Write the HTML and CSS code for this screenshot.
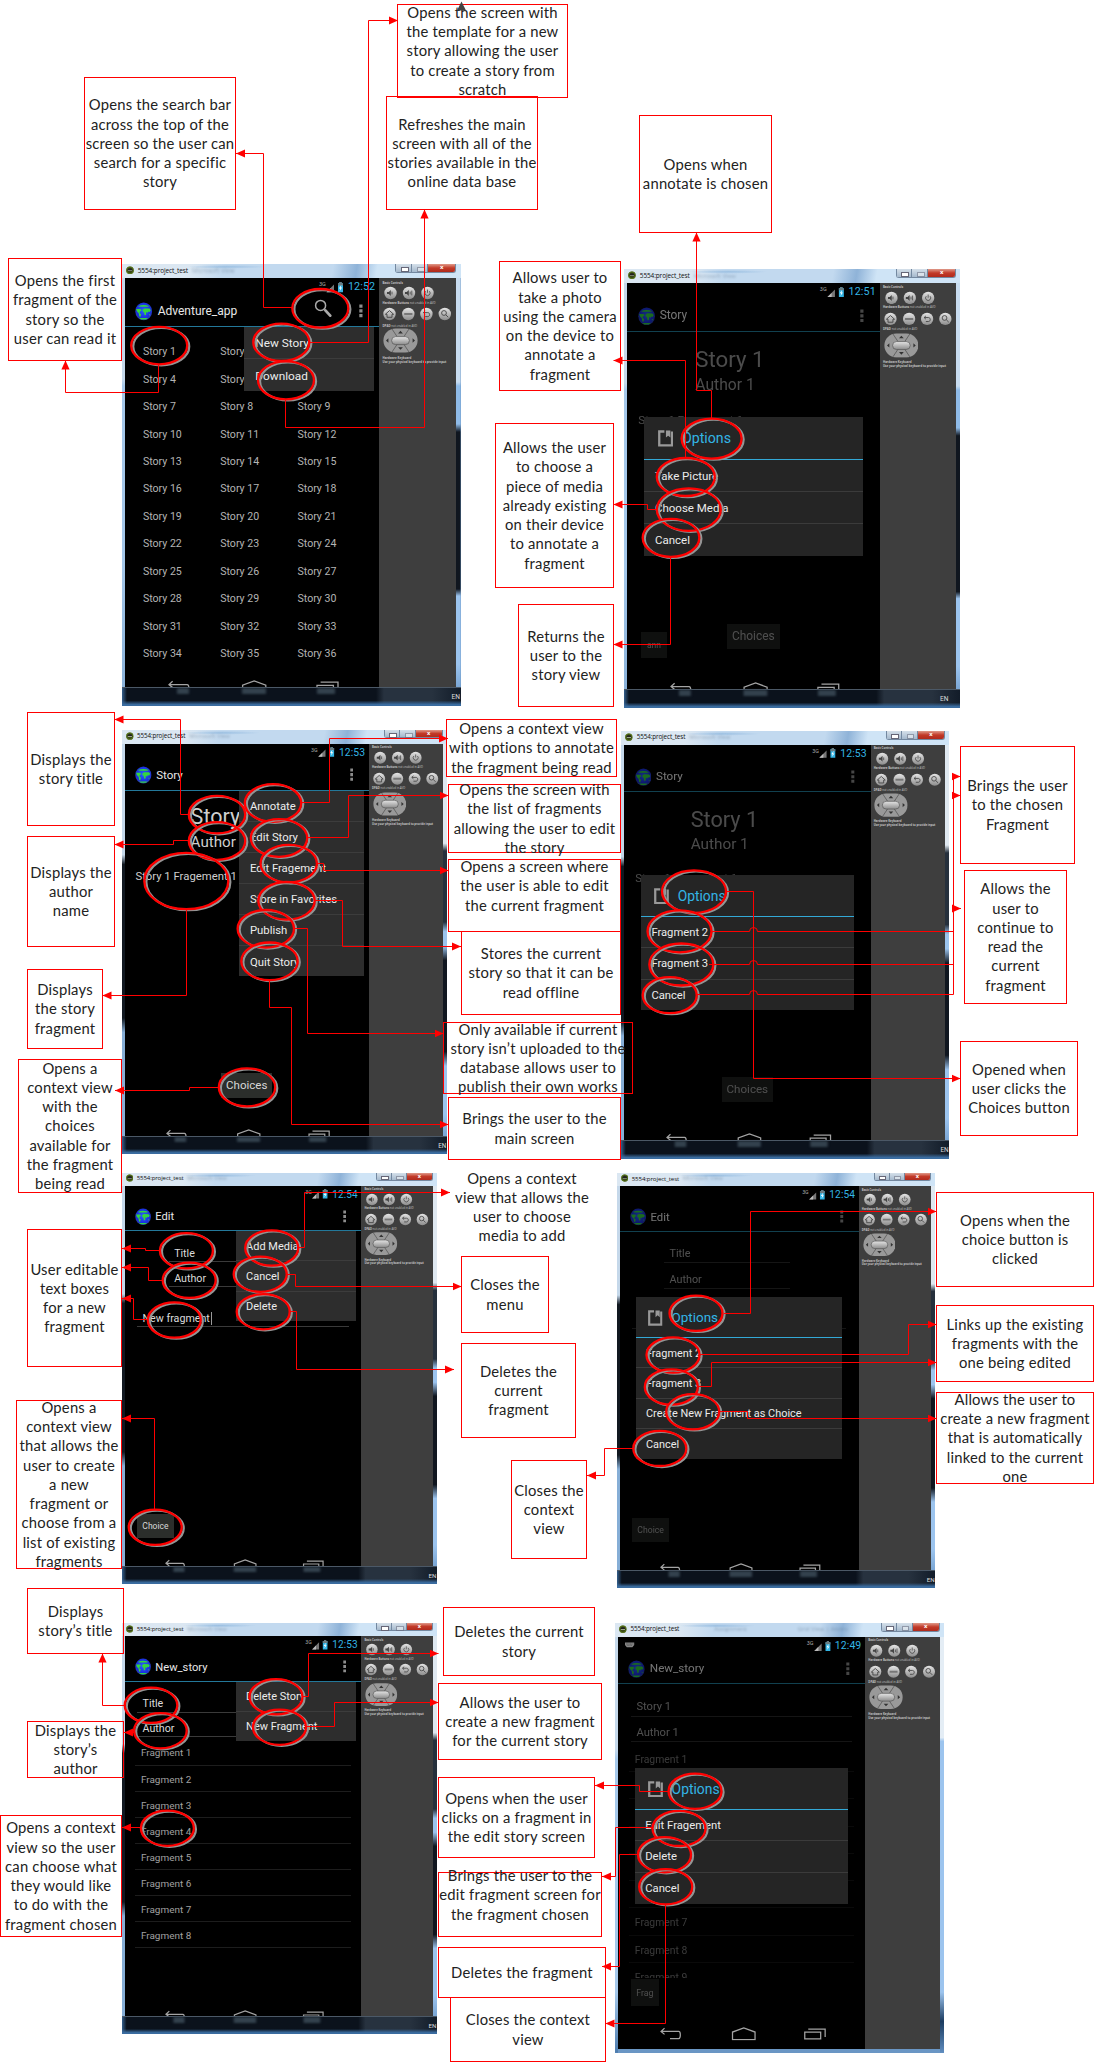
FILE: index.html
```html
<!DOCTYPE html>
<html lang="en">
<head>
<meta charset="utf-8">
<title>Adventure app storyboard</title>
<link rel="stylesheet" href="styles.css">
</head>
<body>
<svg class="defs" width="0" height="0" aria-hidden="true">
  <defs>
    <radialGradient id="sea" cx=".5" cy=".45" r=".55"><stop offset="0" stop-color="#2a62ff"/><stop offset=".75" stop-color="#1a30e0"/><stop offset="1" stop-color="#2b3fa8"/></radialGradient>
    <linearGradient id="metal" x1="0" y1="0" x2="0" y2="1"><stop offset="0" stop-color="#e4e4e4"/><stop offset="1" stop-color="#8c8c8c"/></linearGradient>
    <marker id="arrow" viewBox="0 0 9 9" refX="9" refY="4.5" markerWidth="9" markerHeight="9" markerUnits="userSpaceOnUse" orient="auto"><path d="M0 .4L9 4.5L0 8.6z" fill="#f00"/></marker>
  </defs>
  <symbol id="globe" viewBox="0 0 18 19"><ellipse cx="9" cy="9.5" rx="8.7" ry="9.2" fill="url(#sea)"/><path d="M3 4.2Q9 1.6 15 4.2L13 4.8H5zM1.2 7h4.6l1 1.6-1.6 1-.4 1.6 1.6 1.2-.8 3-1.2-.8-.4-3L2 9.4zM8 7.6l2-1.2 5 .2 1.4 1.6-1.2 2-1.4-.6-.6 1.4-1.6-.8-.2 3-1.4.4-.6-3L8 9.4zM14.4 12.4l1.4.2-.8 1.4zM4.4 16.4h9l-2 1.5H6.6z" fill="#35d63f"/></symbol>
  <symbol id="droid" viewBox="0 0 9 9"><circle cx="4.5" cy="4.5" r="4.3" fill="#3a4a18"/><circle cx="4.5" cy="4.5" r="3.9" fill="none" stroke="#6b8f1c" stroke-width=".8"/><path d="M1.7 5.4V4.5a2.8 2.3 0 0 1 5.6 0v.9z" fill="#222"/><path d="M2 4.4h5v.7H2z" fill="#c9d6b4"/></symbol>
  <symbol id="signals" viewBox="0 0 24 12"><path d="M5.5 11.2L13 3.6v7.6z" fill="#777"/><path d="M9.7 7v4.2H5.5z" fill="#bbb"/><path d="M17 2.2h1.4V1h2.2v1.2H22v9h-5z" fill="#33b5e5"/><path d="M17 2.2h1.4V1h2.2v1.2H22v2.2h-5z" fill="#6b7b80"/><path d="M20.3 4l-2.4 3.4h1.4l-.6 2.6 2.4-3.4h-1.4z" fill="#fff"/></symbol>
  <symbol id="dots" viewBox="0 0 4 14"><path d="M.3.5h3.2v3.2H.3zM.3 5.3h3.2v3.2H.3zM.3 10.1h3.2v3.2H.3z" fill="#8c8c8c"/></symbol>
  <symbol id="lens" viewBox="0 0 18 18"><circle cx="6.6" cy="6.4" r="5" fill="none" stroke="#aaa" stroke-width="1.5"/><path d="M10.2 10.4l1.6 1.6" stroke="#aaa" stroke-width="1.4"/><path d="M11.6 11.6l4.6 5" stroke="#aaa" stroke-width="2.8" stroke-linecap="round"/></symbol>
  <symbol id="note" viewBox="0 0 16 17"><path d="M6.6 1.3H1.3v14.4h13.2V1.3" fill="none" stroke="#999" stroke-width="2.4"/><path d="M8.2.2h4.6v7.4l-2.3-2-2.3 2z" fill="#999"/></symbol>
  <symbol id="nav" viewBox="0 0 172 14"><g fill="none" stroke="#a4a4a4" stroke-width="1.3"><path d="M4.6 1.2L1 4.6l3.6 3M1.4 4.6h17.8c2.2 0 2.2 7.4 0 7.4h-9"/><path d="M74.6 13.1V5.2L86.2 1l11.6 4.2v7.9z"/><path d="M149 5.4h16.4v6.8H149zM152.6 2.2H170v8"/></g></symbol>
  <symbol id="row1" viewBox="0 0 68 14"><g fill="url(#metal)"><circle cx="8.5" cy="7" r="6.2"/><circle cx="27" cy="7" r="6.2"/><circle cx="45.5" cy="7" r="6.2"/></g><path d="M5 6h1.8l2-2v6l-2-2H5zM23 6h1.8l2-2v6l-2-2H23z" fill="#444"/><path d="M10 5.6v2.8M28.2 5.6v2.8M29.8 4.6v4.8M45.5 3.6v3.2M43.6 5.2a2.6 2.6 0 1 0 3.8 0" fill="none" stroke="#444" stroke-width=".8"/></symbol>
  <symbol id="row2" viewBox="0 0 72 14"><g fill="url(#metal)"><circle cx="7.5" cy="7" r="6.2"/><circle cx="26.3" cy="7" r="6.2"/><circle cx="44.4" cy="7" r="6.2"/><circle cx="62.8" cy="7" r="6.2"/></g><g fill="none" stroke="#444" stroke-width=".9"><path d="M3.4 7.3L7.5 3.6l4.1 3.7H10v3H5v-3z"/><path d="M43.2 4l-1.8 1.6 1.8 1.6M41.6 5.6h4.2c2.4 0 2.4 4 0 4h-2.6"/><circle cx="62" cy="6" r="2.4"/><path d="M63.8 7.8l2.4 2.4"/></g><path d="M22.2 6h8.2v2h-8.2z" fill="#777"/></symbol>
  <symbol id="dpad" viewBox="0 0 35 25"><rect x=".4" y=".4" width="34.2" height="24.2" rx="12" fill="#999"/><path d="M9 1l5 7.5M26 1l-5 7.5M9 24l5-7.5M26 24l-5-7.5" stroke="#555" stroke-width=".8"/><rect x="8.6" y="8.6" width="17.8" height="8" rx="4" fill="url(#metal)" stroke="#555" stroke-width=".7"/><path d="M17.5 2.8l2.4 2.6h-4.8zM17.5 21.8l2.4-2.6h-4.8zM3 12.5l2.4-2.2v4.4zM32 12.5l-2.4-2.2v4.4z" fill="#333"/></symbol>
</svg>

<main class="board">

<section class="device d1"><div class="phone">
  <header class="frame-bar"><svg class="droid"><use href="#droid"/></svg><b>5554:project_test</b><i>Microsoft View</i><span class="win"><u></u><u></u><em>x</em></span></header>
  <div class="inner">
    <div class="screen">
      <div class="status"><small>3G</small><svg class="signals"><use href="#signals"/></svg><span>12:52</span></div>
      <div class="appbar"><svg class="globe"><use href="#globe"/></svg><h2>Adventure_app</h2><svg class="lens"><use href="#lens"/></svg><svg class="dots"><use href="#dots"/></svg></div>
      <div class="stories"><span>Story 1</span><span>Story 2</span><span>Story 3</span><span>Story 4</span><span>Story 5</span><span>Story 6</span><span>Story 7</span><span>Story 8</span><span>Story 9</span><span>Story 10</span><span>Story 11</span><span>Story 12</span><span>Story 13</span><span>Story 14</span><span>Story 15</span><span>Story 16</span><span>Story 17</span><span>Story 18</span><span>Story 19</span><span>Story 20</span><span>Story 21</span><span>Story 22</span><span>Story 23</span><span>Story 24</span><span>Story 25</span><span>Story 26</span><span>Story 27</span><span>Story 28</span><span>Story 29</span><span>Story 30</span><span>Story 31</span><span>Story 32</span><span>Story 33</span><span>Story 34</span><span>Story 35</span><span>Story 36</span></div>
      <ul class="menu"><li>New Story</li><li>Download</li></ul>
      <svg class="nav"><use href="#nav"/></svg>
    </div>
    <aside class="controls"><p><b>Basic Controls</b></p><svg class="row1"><use href="#row1"/></svg><p><b>Hardware Buttons</b> not enabled in AVD</p><svg class="row2"><use href="#row2"/></svg><p><b>DPAD</b> not enabled in AVD</p><svg class="dpad"><use href="#dpad"/></svg><p><b>Hardware Keyboard<br>Use your physical keyboard to provide input</b></p></aside>
  </div>
  <footer class="taskbar"><span>EN</span></footer>
</div></section>

<section class="device d2"><div class="phone">
  <header class="frame-bar"><svg class="droid"><use href="#droid"/></svg><b>5554:project_test</b><i>Microsoft View</i><span class="win"><u></u><u></u><em>x</em></span></header>
  <div class="inner">
    <div class="screen dim">
      <div class="status"><small>3G</small><svg class="signals"><use href="#signals"/></svg><span>12:51</span></div>
      <div class="appbar"><svg class="globe"><use href="#globe"/></svg><h2>Story</h2><svg class="dots"><use href="#dots"/></svg></div>
      <div class="reader"><h3>Story 1</h3><h4>Author 1</h4><p>Story 1 Fragement 1</p><div class="keys two"><span class="key low">ann</span><span class="key">Choices</span></div></div>
      <div class="dialog"><h5><svg class="note-icon"><use href="#note"/></svg>Options</h5><ul><li>Take Picture</li><li>Choose Media</li><li>Cancel</li></ul></div>
      <svg class="nav"><use href="#nav"/></svg>
    </div>
    <aside class="controls"><p><b>Basic Controls</b></p><svg class="row1"><use href="#row1"/></svg><p><b>Hardware Buttons</b> not enabled in AVD</p><svg class="row2"><use href="#row2"/></svg><p><b>DPAD</b> not enabled in AVD</p><svg class="dpad"><use href="#dpad"/></svg><p><b>Hardware Keyboard<br>Use your physical keyboard to provide input</b></p></aside>
  </div>
  <footer class="taskbar"><span class="inset">EN</span></footer>
</div></section>

<section class="device d3"><div class="phone">
  <header class="frame-bar"><svg class="droid"><use href="#droid"/></svg><b>5554:project_test</b><i>Microsoft View</i><span class="win"><u></u><u></u><em>x</em></span></header>
  <div class="inner">
    <div class="screen">
      <div class="status"><small>3G</small><svg class="signals"><use href="#signals"/></svg><span>12:53</span></div>
      <div class="appbar"><svg class="globe"><use href="#globe"/></svg><h2>Story</h2><svg class="dots"><use href="#dots"/></svg></div>
      <div class="reader"><h3>Story 1</h3><h4>Author 1</h4><p>Story 1 Fragement 1</p><div class="keys"><span class="key">Choices</span></div></div>
      <ul class="menu"><li>Annotate</li><li>Edit Story</li><li>Edit Fragement</li><li>Store in Favorites</li><li>Publish</li><li>Quit Story</li></ul>
      <svg class="nav"><use href="#nav"/></svg>
    </div>
    <aside class="controls"><p><b>Basic Controls</b></p><svg class="row1"><use href="#row1"/></svg><p><b>Hardware Buttons</b> not enabled in AVD</p><svg class="row2"><use href="#row2"/></svg><p><b>DPAD</b> not enabled in AVD</p><svg class="dpad"><use href="#dpad"/></svg><p><b>Hardware Keyboard<br>Use your physical keyboard to provide input</b></p></aside>
  </div>
  <footer class="taskbar"><span>EN</span></footer>
</div></section>

<section class="device d4"><div class="phone">
  <header class="frame-bar"><svg class="droid"><use href="#droid"/></svg><b>5554:project_test</b><i>Microsoft View</i><span class="win"><u></u><u></u><em>x</em></span></header>
  <div class="inner">
    <div class="screen dim">
      <div class="status"><small>3G</small><svg class="signals"><use href="#signals"/></svg><span>12:53</span></div>
      <div class="appbar"><svg class="globe"><use href="#globe"/></svg><h2>Story</h2><svg class="dots"><use href="#dots"/></svg></div>
      <div class="reader"><h3>Story 1</h3><h4>Author 1</h4><p>Story 1 Fragement 1</p><div class="keys"><span class="key">Choices</span></div></div>
      <div class="dialog"><h5><svg class="note-icon"><use href="#note"/></svg>Options</h5><ul><li>Fragment 2</li><li>Fragment 3</li><li>Cancel</li></ul></div>
      <svg class="nav"><use href="#nav"/></svg>
    </div>
    <aside class="controls"><p><b>Basic Controls</b></p><svg class="row1"><use href="#row1"/></svg><p><b>Hardware Buttons</b> not enabled in AVD</p><svg class="row2"><use href="#row2"/></svg><p><b>DPAD</b> not enabled in AVD</p><svg class="dpad"><use href="#dpad"/></svg><p><b>Hardware Keyboard<br>Use your physical keyboard to provide input</b></p></aside>
  </div>
  <footer class="taskbar"><span>EN</span></footer>
</div></section>

<section class="device d5"><div class="phone">
  <header class="frame-bar"><svg class="droid"><use href="#droid"/></svg><b>5554:project_test</b><i>Microsoft View</i><span class="win"><u></u><u></u><em>x</em></span></header>
  <div class="inner">
    <div class="screen">
      <div class="status"><small>3G</small><svg class="signals"><use href="#signals"/></svg><span>12:54</span></div>
      <div class="appbar"><svg class="globe"><use href="#globe"/></svg><h2>Edit</h2><svg class="dots"><use href="#dots"/></svg></div>
      <div class="editor"><p class="field">Title</p><p class="field">Author</p><p class="field wide"><span class="caret">New fragment</span></p><span class="key">Choice</span></div>
      <ul class="menu"><li>Add Media</li><li>Cancel</li><li>Delete</li></ul>
      <svg class="nav"><use href="#nav"/></svg>
    </div>
    <aside class="controls"><p><b>Basic Controls</b></p><svg class="row1"><use href="#row1"/></svg><p><b>Hardware Buttons</b> not enabled in AVD</p><svg class="row2"><use href="#row2"/></svg><p><b>DPAD</b> not enabled in AVD</p><svg class="dpad"><use href="#dpad"/></svg><p><b>Hardware Keyboard<br>Use your physical keyboard to provide input</b></p></aside>
  </div>
  <footer class="taskbar"><span>EN</span></footer>
</div></section>

<section class="device d6"><div class="phone">
  <header class="frame-bar"><svg class="droid"><use href="#droid"/></svg><b>5554:project_test</b><i>Microsoft View</i><span class="win"><u></u><u></u><em>x</em></span></header>
  <div class="inner">
    <div class="screen dim">
      <div class="status"><small>3G</small><svg class="signals"><use href="#signals"/></svg><span>12:54</span></div>
      <div class="appbar"><svg class="globe"><use href="#globe"/></svg><h2>Edit</h2><svg class="dots"><use href="#dots"/></svg></div>
      <div class="editor"><p class="field">Title</p><p class="field">Author</p><p class="field wide"></p><span class="key">Choice</span></div>
      <div class="dialog high"><h5><svg class="note-icon"><use href="#note"/></svg>Options</h5><ul><li>Fragment 2</li><li>Fragment 3</li><li>Create New Fragment as Choice</li><li>Cancel</li></ul></div>
      <svg class="nav"><use href="#nav"/></svg>
    </div>
    <aside class="controls"><p><b>Basic Controls</b></p><svg class="row1"><use href="#row1"/></svg><p><b>Hardware Buttons</b> not enabled in AVD</p><svg class="row2"><use href="#row2"/></svg><p><b>DPAD</b> not enabled in AVD</p><svg class="dpad"><use href="#dpad"/></svg><p><b>Hardware Keyboard<br>Use your physical keyboard to provide input</b></p></aside>
  </div>
  <footer class="taskbar"><span>EN</span></footer>
</div></section>

<section class="device d7"><div class="phone">
  <header class="frame-bar"><svg class="droid"><use href="#droid"/></svg><b>5554:project_test</b><i>Microsoft View</i><span class="win"><u></u><u></u><em>x</em></span></header>
  <div class="inner">
    <div class="screen">
      <div class="status"><small>3G</small><svg class="signals"><use href="#signals"/></svg><span>12:53</span></div>
      <div class="appbar"><svg class="globe"><use href="#globe"/></svg><h2>New_story</h2><svg class="dots"><use href="#dots"/></svg></div>
      <div class="editor"><p class="field full">Title</p><p class="field full">Author</p></div>
      <ol class="fragments"><li>Fragment 1</li><li>Fragment 2</li><li>Fragment 3</li><li>Fragment 4</li><li>Fragment 5</li><li>Fragment 6</li><li>Fragment 7</li><li>Fragment 8</li></ol>
      <ul class="menu"><li>Delete Story</li><li>New Fragment</li></ul>
      <svg class="nav"><use href="#nav"/></svg>
    </div>
    <aside class="controls"><p><b>Basic Controls</b></p><svg class="row1"><use href="#row1"/></svg><p><b>Hardware Buttons</b> not enabled in AVD</p><svg class="row2"><use href="#row2"/></svg><p><b>DPAD</b> not enabled in AVD</p><svg class="dpad"><use href="#dpad"/></svg><p><b>Hardware Keyboard<br>Use your physical keyboard to provide input</b></p></aside>
  </div>
  <footer class="taskbar"><span>EN</span></footer>
</div></section>

<section class="device d8"><div class="phone">
  <header class="frame-bar"><svg class="droid"><use href="#droid"/></svg><b>5554:project_test</b><i class="tabs"><span>Assignment</span><span>Grid View | Andro</span></i><span class="win"><u></u><u></u><em>x</em></span></header>
  <div class="inner">
    <div class="screen dim">
      <div class="status"><svg class="keyboard" viewBox="0 0 10 6"><path d="M0 .5h10v2.6L8 5.4H2L0 3.1z" fill="#888"/><path d="M1 2h8M2 3.4h6" stroke="#222" stroke-width=".5" stroke-dasharray="1 .5"/></svg><small>3G</small><svg class="signals"><use href="#signals"/></svg><span>12:49</span></div>
      <div class="appbar"><svg class="globe"><use href="#globe"/></svg><h2>New_story</h2><svg class="dots"><use href="#dots"/></svg></div>
      <div class="editor"><p class="field full">Story 1</p><p class="field full">Author 1</p></div>
      <ol class="fragments cut"><li>Fragment 1</li><li>Fragment 2</li><li>Fragment 3</li><li>Fragment 4</li><li>Fragment 5</li><li>Fragment 6</li><li>Fragment 7</li><li>Fragment 8</li><li>Fragment 9</li></ol>
      <span class="key frag">Frag</span>
      <div class="dialog"><h5><svg class="note-icon"><use href="#note"/></svg>Options</h5><ul><li>Edit Fragement</li><li>Delete</li><li>Cancel</li></ul></div>
      <svg class="nav"><use href="#nav"/></svg>
    </div>
    <aside class="controls"><p><b>Basic Controls</b></p><svg class="row1"><use href="#row1"/></svg><p><b>Hardware Buttons</b> not enabled in AVD</p><svg class="row2"><use href="#row2"/></svg><p><b>DPAD</b> not enabled in AVD</p><svg class="dpad"><use href="#dpad"/></svg><p><b>Hardware Keyboard<br>Use your physical keyboard to provide input</b></p></aside>
  </div>
</div></section>

<p class="callout c-template">Opens the screen with<br>the template for a new<br>story allowing the user<br>to create a story from<br>scratch</p>
<p class="callout c-search">Opens the search bar<br>across the top of the<br>screen so the user can<br>search for a specific<br>story</p>
<p class="callout c-refresh">Refreshes the main<br>screen with all of the<br>stories available in the<br>online data base</p>
<p class="callout c-first">Opens the first<br>fragment of the<br>story so the<br>user can read it</p>
<p class="callout c-annotate">Opens when<br>annotate is chosen</p>
<p class="callout c-photo">Allows user to<br>take a photo<br>using the camera<br>on the device to<br>annotate a<br>fragment</p>
<p class="callout c-media">Allows the user<br>to choose a<br>piece of media<br>already existing<br>on their device<br>to annotate a<br>fragment</p>
<p class="callout c-return">Returns the<br>user to the<br>story view</p>
<p class="callout c-title">Displays the<br>story title</p>
<p class="callout c-author">Displays the<br>author<br>name</p>
<p class="callout c-fragment">Displays<br>the story<br>fragment</p>
<p class="callout c-choices">Opens a<br>context view<br>with the<br>choices<br>available for<br>the fragment<br>being read</p>
<p class="callout c-options">Opens a context view<br>with options to annotate<br>the fragment being read</p>
<p class="callout c-list">Opens the screen with<br>the list of fragments<br>allowing the user to edit<br>the story</p>
<p class="callout c-edit raised">Opens a screen where<br>the user is able to edit<br>the current fragment</p>
<p class="callout c-store">Stores the current<br>story so that it can be<br>read offline</p>
<p class="callout c-publish">Only available if current<br>story isn’t uploaded to the<br>database allows user to<br>publish their own works</p>
<p class="callout c-main">Brings the user to the<br>main screen</p>
<p class="callout c-addmedia">Opens a context<br>view that allows the<br>user to choose<br>media to add</p>
<p class="callout c-menu">Closes the<br>menu</p>
<p class="callout c-delfrag">Deletes the<br>current<br>fragment</p>
<p class="callout c-boxes">User editable<br>text boxes<br>for a new<br>fragment</p>
<p class="callout c-newchoice">Opens a<br>context view<br>that allows the<br>user to create<br>a new<br>fragment or<br>choose from a<br>list of existing<br>fragments</p>
<p class="callout c-closeview">Closes the<br>context<br>view</p>
<p class="callout c-storytitle">Displays<br>story’s title</p>
<p class="callout c-storyauthor">Displays the<br>story’s<br>author</p>
<p class="callout c-whattodo">Opens a context<br>view so the user<br>can choose what<br>they would like<br>to do with the<br>fragment chosen</p>
<p class="callout c-delstory">Deletes the current<br>story</p>
<p class="callout c-newfrag">Allows the user to<br>create a new fragment<br>for the current story</p>
<p class="callout c-clicks">Opens when the user<br>clicks on a fragment in<br>the edit story screen</p>
<p class="callout c-brings raised">Brings the user to the<br>edit fragment screen for<br>the fragment chosen</p>
<p class="callout c-deletes">Deletes the fragment</p>
<p class="callout c-closes">Closes the context<br>view</p>
<p class="callout c-chosen">Brings the user<br>to the chosen<br>Fragment</p>
<p class="callout c-continue">Allows the<br>user to<br>continue to<br>read the<br>current<br>fragment</p>
<p class="callout c-opened">Opened when<br>user clicks the<br>Choices button</p>
<p class="callout c-choicebtn">Opens when the<br>choice button is<br>clicked</p>
<p class="callout c-links">Links up the existing<br>fragments with the<br>one being edited</p>
<p class="callout c-auto">Allows the user to<br>create a new fragment<br>that is automatically<br>linked to the current<br>one</p>

<svg class="wires" width="1094" height="2062" viewBox="0 0 1094 2062">
  <path d="M461.5 1.5l4.5 9h-9z" fill="#444"/>
  <g class="rings">
    <ellipse cx="320.3" cy="308.3" rx="28" ry="19.3"/><ellipse cx="281.3" cy="342.3" rx="28" ry="18.7"/><ellipse cx="286" cy="380.3" rx="28" ry="19"/><ellipse cx="159.2" cy="345.6" rx="28" ry="18.7"/>
    <ellipse cx="711.6" cy="438.6" rx="30" ry="20"/><ellipse cx="685.8" cy="477" rx="29" ry="19"/><ellipse cx="688.8" cy="509.6" rx="32" ry="21.2"/><ellipse cx="671" cy="537.8" rx="28.3" ry="19"/>
    <ellipse cx="217" cy="814.6" rx="28.2" ry="18.8"/><ellipse cx="217" cy="841" rx="28.2" ry="18.8"/><ellipse cx="186.3" cy="881" rx="42" ry="28.2"/><ellipse cx="273" cy="803" rx="28.2" ry="18.8"/><ellipse cx="279" cy="838" rx="28.2" ry="18.8"/><ellipse cx="288.7" cy="863.6" rx="28.2" ry="18.8"/><ellipse cx="286.5" cy="900.8" rx="28.2" ry="18.8"/><ellipse cx="265.8" cy="928.8" rx="28.2" ry="18.8"/><ellipse cx="269.5" cy="961.3" rx="28.2" ry="18.8"/><ellipse cx="247" cy="1087.3" rx="28.2" ry="19"/>
    <ellipse cx="694" cy="891.6" rx="32" ry="21.2"/><ellipse cx="679.5" cy="931.3" rx="32" ry="21"/><ellipse cx="681.3" cy="964.5" rx="32" ry="21"/><ellipse cx="669.7" cy="995.2" rx="27" ry="18"/>
    <ellipse cx="186.4" cy="1250.8" rx="26.5" ry="17.6"/><ellipse cx="189.2" cy="1280.3" rx="26.5" ry="17.6"/><ellipse cx="174.3" cy="1320" rx="26.5" ry="17.6"/><ellipse cx="271.7" cy="1248" rx="26.5" ry="17.6"/><ellipse cx="260.2" cy="1274.2" rx="26.5" ry="17.6"/><ellipse cx="263.2" cy="1311.7" rx="26.5" ry="17.6"/><ellipse cx="155.2" cy="1527.3" rx="26.5" ry="17.6"/>
    <ellipse cx="696" cy="1313.3" rx="26.5" ry="17.6"/><ellipse cx="673" cy="1355" rx="26.5" ry="17.6"/><ellipse cx="671.3" cy="1387" rx="26.5" ry="17.6"/><ellipse cx="692.7" cy="1411.8" rx="26.5" ry="17.6"/><ellipse cx="659.8" cy="1448.4" rx="26.5" ry="17.6"/>
    <ellipse cx="151" cy="1705.3" rx="26.3" ry="17.6"/><ellipse cx="160.4" cy="1730.7" rx="26.3" ry="17.6"/><ellipse cx="276" cy="1696.8" rx="26.5" ry="17.6"/><ellipse cx="279.5" cy="1727.2" rx="26.5" ry="17.6"/><ellipse cx="167.4" cy="1828.2" rx="26.5" ry="17.6"/>
    <ellipse cx="695" cy="1791.2" rx="26.5" ry="17.6"/><ellipse cx="679" cy="1828.4" rx="26.5" ry="17.6"/><ellipse cx="664.5" cy="1854.7" rx="26.5" ry="17.6"/><ellipse cx="665.7" cy="1886.7" rx="26.5" ry="17.6"/>
  </g>
  <g class="lines">
    <path d="M292 307.5H263.5V153.5H236"/><path d="M309.5 342.5H368.5V20.5H398"/><path d="M285.5 400V427.5H424.5V209.5"/><path d="M158.5 365V392.5H65.5V360.5"/>
    <path d="M711.5 418V390.5H696.5V232.5"/><path d="M685.5 458V360.5H613.5"/><path d="M656 509.5H647.5V504.5H613.5"/><path d="M670.5 557V644.5H613.5"/>
    <path d="M188.5 814.5H180.5V719.5H114.5"/><path d="M188.5 840.5H173.5V844.5H114.5"/><path d="M186.5 910V995.5H102.5"/><path d="M218 1087.5H189.5V1090.5H115"/>
    <path d="M302 802.5H329.5V738.5H448"/><path d="M308 837.5H348.5V795.5H448.5"/><path d="M317.5 863.5H323.5V870.5H448.5"/><path d="M315 900.5H342.5V946.5H461"/><path d="M295 928.5H307.5V1033.5H443.5"/><path d="M269.5 981V1007.5H291.5V1124.5H448.5"/>
    <path d="M727 891.5H753.5V1078.5H960.5"/>
    <path d="M712 931.5H749.5a4 4 0 0 1 8 0H953.5M709 964.5H749.5a4 4 0 0 1 8 0H953.5M697 994.5H749.5a4 4 0 0 1 8 0H953.5V776.5H960.5" class="plain"/>
    <path d="M952 776.5H960.5"/><path d="M952 795.5H960.5"/><path d="M952 908.5H961"/>
    <path d="M160 1250.5H145.5V1248.5H122"/><path d="M163 1280.5H148.5V1267.5H122"/><path d="M148 1319.5H133.5V1298.5H122"/><path d="M298 1247.5H304.5V1192.5H450"/><path d="M287 1274.5H295.5V1286.5H461.5"/><path d="M290 1311.5H296.5V1369.5H454"/><path d="M154.5 1509V1418.5H122"/>
    <path d="M724 1313.5H750.5V1211.5H936.5"/><path d="M700 1354.5H908.5V1324.5H936.5"/><path d="M698 1386.5H711.5V1362.5H936.5"/><path d="M719.5 1411.5H747.5V1418.5H936.5"/><path d="M633 1448.5H604.5V1475.5H587"/>
    <path d="M124.5 1705.5H102.5V1653.5"/><path d="M135 1732.5H124"/><path d="M303 1696.5H308.5V1653.5H438.5"/><path d="M307 1726.5H334.5V1702.5H438.5"/><path d="M141 1827.5H122"/>
    <path d="M668.5 1791.5H639.5V1785.5H595"/><path d="M652 1827.5H615.5V1876.5H602"/><path d="M637 1854.5H619.5V1966.5H602"/><path d="M665.5 1905V2023.5H605.5"/>
  </g>
</svg>
</main>
</body>
</html>
```
FILE: styles.css
```css
* { box-sizing: border-box; }
body { margin: 0; background: #fff; }
h2, h3, h4, h5, p, ul, ol { margin: 0; padding: 0; font-weight: 400; list-style: none; }
svg { display: block; flex: none; }
.defs { position: absolute; }

.board { position: relative; width: 1094px; height: 2062px; overflow: hidden; }

/* ---------- emulator windows ---------- */
.device { position: absolute; }
.d1 { left: 121.5px; top: 264px; }
.d2 { left: 623.8px; top: 269px; }
.d3 { left: 121.5px; top: 730px; }
.d4 { left: 621px; top: 731px; }
.d5 { left: 121.7px; top: 1172.7px; }
.d6 { left: 616.5px; top: 1172.7px; }
.d7 { left: 121.7px; top: 1623px; }
.d8 { left: 614.7px; top: 1623px; }
.d2 .phone { zoom: .993; }
.d3 .phone { zoom: .96; }
.d4 .phone { zoom: .968; }
.d5 .phone { zoom: .93; }
.d6 .phone { zoom: .94; }
.d7 .phone { zoom: .93; }
.d8 .phone { zoom: .972; }

.phone {
  position: relative;
  width: 339px;
  height: 442px;
  padding: 0 4.6px 3.4px 3.6px;
  overflow: hidden;
  font-family: Roboto, "Liberation Sans", sans-serif;
  background:
    linear-gradient(#c8dcf0 0 118px, #8fbbe8 122px 160px, #10161f 168px 325px, #9cc4ee 332px 400px, #5f8dbf) right / 4.6px 100% no-repeat,
    linear-gradient(#c5d8ea 0 115px, #a5c8ea 122px 300px, #86aed6) left / 3.6px 100% no-repeat,
    #6a96c4;
}
.d3 .phone, .d5 .phone, .d7 .phone, .d4 .phone, .d6 .phone {
  background:
    linear-gradient(#dfe8f0 0 118px, #26303c 126px 200px, #9cc4ee 210px 225px, #10161f 240px 335px, #9cc4ee 350px 400px, #5f8dbf) right / 4.6px 100% no-repeat,
    linear-gradient(#c5d8ea 0 130px, #111820 140px 300px, #86aed6 315px) left / 3.6px 100% no-repeat,
    #6a96c4;
}
.d8 .phone {
  background:
    linear-gradient(#e4edf5 0 118px, #9cc4ee 122px 380px, #1c3c60 410px, #5f8dbf) right / 4.6px 100% no-repeat,
    linear-gradient(#c5d8ea 0 130px, #a5c8ea 140px 380px, #4d7cae) left / 3.6px 100% no-repeat,
    #6a96c4;
}
.frame-bar {
  display: flex;
  align-items: center;
  height: 14.3px;
  margin: 0 -4.6px 0 -3.6px;
  padding: 0 4.4px 2px 4.6px;
  background:
    radial-gradient(ellipse at 31% 20%, #9cc0e2 0, transparent 12%),
    linear-gradient(100deg, #dbe7f2 0 20%, #c2d9ef 30% 62%, #8fb3d8 69%, #cfe4f6 75%);
}
.droid { width: 8px; height: 8.6px; }
.frame-bar b { margin-left: 3.6px; font: 400 6.5px "Open Sans", "Noto Sans", sans-serif; letter-spacing: -.1px; color: #111; }
.frame-bar i { flex: 1; margin-left: 4px; font: 400 6.2px "Open Sans", sans-serif; color: #5b7188; opacity: .5; filter: blur(.9px); }
.frame-bar .tabs { display: flex; gap: 52px; padding-left: 32px; white-space: nowrap; }
.win { display: flex; align-self: flex-start; height: 8.8px; border: .7px solid #7388a0; border-top: 0; border-radius: 0 0 3px 3px; }
.win u { display: block; width: 16px; border-right: .7px solid #7388a0; background: linear-gradient(#d5e0ea, #a5b9cd); position: relative; }
.win u::after { content: ""; position: absolute; left: 4.5px; top: 3.4px; width: 6px; height: 2.6px; background: #fff; border: .5px solid #667; }
.win u + u::after { opacity: .5; }
.win em { width: 27px; border-radius: 0 0 2px 0; background: linear-gradient(#e09a8a, #c23a28 50%, #b02a1c); color: #fff; font: 700 6px/7.4px "Open Sans", sans-serif; text-align: center; }

.inner { display: flex; height: 424.3px; }
.screen { position: relative; width: 254.2px; background: #000; overflow: hidden; }

.status { display: flex; align-items: center; height: 17.4px; padding-right: 4px; color: #33b5e5; font-size: 10.8px; justify-content: flex-end; letter-spacing: .1px; }
.status small { font-size: 5.6px; color: #aaa; margin: -5px -5px 0 0; letter-spacing: 0; }
.signals { width: 24px; height: 12px; margin: 0 3px 0 0; }
.keyboard { width: 9.5px; height: 6px; margin: 0 auto 0 7.5px; }

.appbar { display: flex; align-items: center; height: 31.4px; padding: 0 16.2px 0 10.4px; border-bottom: 1.6px solid #23789a; color: #e8e8e8; }
.globe { width: 17.4px; height: 18.8px; margin-top: .6px; }
.appbar h2 { flex: 1; margin-left: 4.8px; padding-top: 1.2px; font-size: 12px; line-height: 14px; }
.lens { width: 18px; height: 18px; margin: -6px 27px 0 0; }
.dots { width: 4px; height: 14px; }
.dim .appbar { border-color: #11404f; }
.dim .appbar > * { opacity: .5; }

.stories { display: grid; grid-template-columns: repeat(3, 77.3px); grid-auto-rows: 27.45px; align-items: center; padding: 10.9px 0 0 17.8px; color: #b4b4b4; font-size: 10.6px; }

.menu { position: absolute; top: 48.8px; right: 5.6px; width: 129.4px; background: #2d2d2d; }
.menu li { display: flex; align-items: center; height: 32.4px; padding: .8px 0 0 11px; border-bottom: 1px solid #3c3c3c; color: #ececec; font-size: 11.8px; }
.menu li:last-child { height: 31.6px; border: 0; }

.dialog { position: absolute; left: 17.2px; top: 134.6px; width: 219.6px; background: #252525; }
.dialog.high { top: 118.2px; }
.dialog h5 { display: flex; align-items: center; gap: 9px; height: 43.4px; padding: 1px 0 0 13.2px; border-bottom: 2px solid #33a9d6; color: #33b5e5; font-size: 14.3px; }
.note-icon { width: 15.6px; height: 17px; }
.dialog li { display: flex; align-items: center; height: 32.4px; padding: .6px 0 0 10.6px; border-bottom: 1px solid #3b3b3b; color: #ececec; font-size: 11.6px; }
.dialog li:last-child { height: 31.6px; border: 0; }

.reader { padding-top: 15px; color: #cfcfcf; }
.reader h3 { padding-left: 68.4px; font-size: 22.4px; line-height: 26px; }
.reader h4 { padding-left: 68.4px; font-size: 15.8px; line-height: 26px; }
.reader p { margin-top: 15px; padding-left: 11px; font-size: 11.8px; line-height: 16px; }
.keys { display: flex; margin-top: 196px; padding-left: 100.4px; }
.keys.two { padding-left: 13.5px; gap: 60.3px; }
.key { display: flex; align-items: center; justify-content: center; width: 53px; height: 26px; background: #2b2e2b; color: #d8d8d8; font-size: 12px; }
.key.low { width: 26.6px; margin-top: 9px; font-size: 8.6px; }
.dim .reader, .dim .editor, .dim .fragments, .dim .frag { opacity: .36; }

.editor { padding-top: 15.4px; color: #dcdcdc; }
.field { width: 134.5px; height: 18px; margin: 0 0 9px 47px; padding-left: 5.8px; border: solid #3a3a3a; border-width: 0 0 1px; font-size: 11.5px; line-height: 17px; }
.field.wide { width: 227.5px; margin: 25px 0 0 13px; }
.field.full { width: 228px; margin: 0 0 8.4px 13px; }
.caret { padding-right: 1px; border-right: 1px solid #999; }
.editor .key { width: 39.4px; height: 25.3px; margin: 201px 0 0 13px; font-size: 9.2px; }

.fragments { width: 232px; margin: -6px 0 0 10.9px; color: #a0a0a0; font-size: 10.7px; }
.fragments li { height: 28.06px; padding-left: 6.2px; line-height: 30px; border-bottom: 1px solid #1d1d1d; }
.fragments.cut { height: 239.5px; overflow: hidden; }
.key.frag { width: 28.8px; height: 27px; margin: 2px 0 0 13px; font-size: 9px; }

.nav { position: absolute; left: 43px; top: 401.4px; width: 172px; height: 14px; }

.controls { flex: 1; padding: 2.6px 0 0 3.2px; background: #3e3e3e; color: #c4c4c4; font: 400 2.9px/4px "Open Sans", sans-serif; white-space: nowrap; }
.row1 { width: 68px; height: 14px; margin: .8px 0 1.6px; }
.row2 { width: 72px; height: 14px; margin: 2px 0 2.4px; }
.dpad { width: 35px; height: 25px; margin: .6px 0 3.2px .8px; }

.taskbar {
  position: absolute; left: 0; right: 0; bottom: 0; height: 19.4px;
  display: flex; align-items: center; justify-content: flex-end;
  border-top: 1px solid #4b5866;
  background: linear-gradient(rgba(40, 80, 120, 0) 70%, #3a6ca0 92%), linear-gradient(90deg, #345f8c 0, #0b121c 5px 254px, #27323f 262px 310px, #121c29);
}
.taskbar::before { content: ""; position: absolute; left: 46.6px; top: 0; width: 172px; height: 6px; background: linear-gradient(90deg, transparent 8px, #33414d 10px 20px, transparent 22px 73px, #33414d 75px 97px, transparent 99px 148px, #33414d 150px 166px, transparent 168px); filter: blur(1px); }
.taskbar span { padding-right: .6px; color: #ddd; font-size: 6.6px; }
.taskbar .inset { margin-right: 11.6px; }

/* ---------- callouts ---------- */
.callout {
  position: absolute;
  display: grid;
  place-content: center;
  border: 1px solid #f00;
  color: #222;
  font: 400 14.8px/19.25px Lato, "Open Sans", sans-serif;
  letter-spacing: .21px;
  text-align: center;
  white-space: nowrap;
}
.callout.raised { padding-bottom: 19px; }
.c-template { left: 397px; top: 4px; width: 171px; height: 94px; }
.c-search { left: 84px; top: 77px; width: 152px; height: 133px; }
.c-refresh { left: 386px; top: 96px; width: 152px; height: 114px; }
.c-first { left: 8px; top: 258px; width: 114px; height: 103px; }
.c-annotate { left: 639px; top: 115px; width: 133px; height: 118px; }
.c-photo { left: 499px; top: 261px; width: 122px; height: 130px; }
.c-media { left: 495px; top: 423px; width: 119px; height: 165px; }
.c-return { left: 518px; top: 604px; width: 96px; height: 103px; }
.c-title { left: 27px; top: 712px; width: 88px; height: 114px; }
.c-author { left: 27px; top: 836px; width: 88px; height: 111px; }
.c-fragment { left: 27px; top: 969px; width: 76px; height: 80px; }
.c-choices { left: 18px; top: 1059px; width: 104px; height: 134px; }
.c-options { left: 446px; top: 719px; width: 171px; height: 58px; }
.c-list { left: 448px; top: 784px; width: 173px; height: 69px; }
.c-edit { left: 448px; top: 859px; width: 173px; height: 73px; }
.c-store { left: 461px; top: 931px; width: 160px; height: 84px; }
.c-publish { left: 443px; top: 1022px; width: 190px; height: 72px; }
.c-main { left: 448px; top: 1097px; width: 173px; height: 63px; }
.c-addmedia { left: 450px; top: 1168px; width: 144px; height: 78px; border: 0; }
.c-menu { left: 461px; top: 1256px; width: 88px; height: 77px; }
.c-delfrag { left: 461px; top: 1343px; width: 115px; height: 95px; }
.c-boxes { left: 27px; top: 1229px; width: 95px; height: 138px; }
.c-newchoice { left: 16px; top: 1400px; width: 106px; height: 169px; }
.c-closeview { left: 511px; top: 1460px; width: 76px; height: 99px; }
.c-storytitle { left: 27px; top: 1588px; width: 97px; height: 66px; }
.c-storyauthor { left: 27px; top: 1721px; width: 97px; height: 57px; }
.c-whattodo { left: 0; top: 1815px; width: 122px; height: 122px; }
.c-delstory { left: 443px; top: 1607px; width: 152px; height: 69px; }
.c-newfrag { left: 438px; top: 1683px; width: 164px; height: 77px; }
.c-clicks { left: 438px; top: 1777px; width: 157px; height: 81px; }
.c-brings { left: 438px; top: 1872px; width: 164px; height: 65px; }
.c-deletes { left: 438px; top: 1947px; width: 168px; height: 51px; }
.c-closes { left: 450px; top: 1997px; width: 156px; height: 65px; }
.c-chosen { left: 960px; top: 746px; width: 115px; height: 118px; }
.c-continue { left: 964px; top: 870px; width: 103px; height: 134px; }
.c-opened { left: 960px; top: 1041px; width: 118px; height: 95px; }
.c-choicebtn { left: 936px; top: 1192px; width: 158px; height: 95px; }
.c-links { left: 936px; top: 1305px; width: 158px; height: 77px; }
.c-auto { left: 936px; top: 1392px; width: 158px; height: 92px; }

/* ---------- highlight rings and connectors ---------- */
.wires { position: absolute; left: 0; top: 0; }
.rings ellipse { fill: none; stroke: #f00; stroke-width: 2.3; filter: drop-shadow(2px 1.9px 0 #949494); }
.lines path { fill: none; stroke: #f00; stroke-width: 1; marker-end: url(#arrow); }
.lines .plain { marker-end: none; }
```
